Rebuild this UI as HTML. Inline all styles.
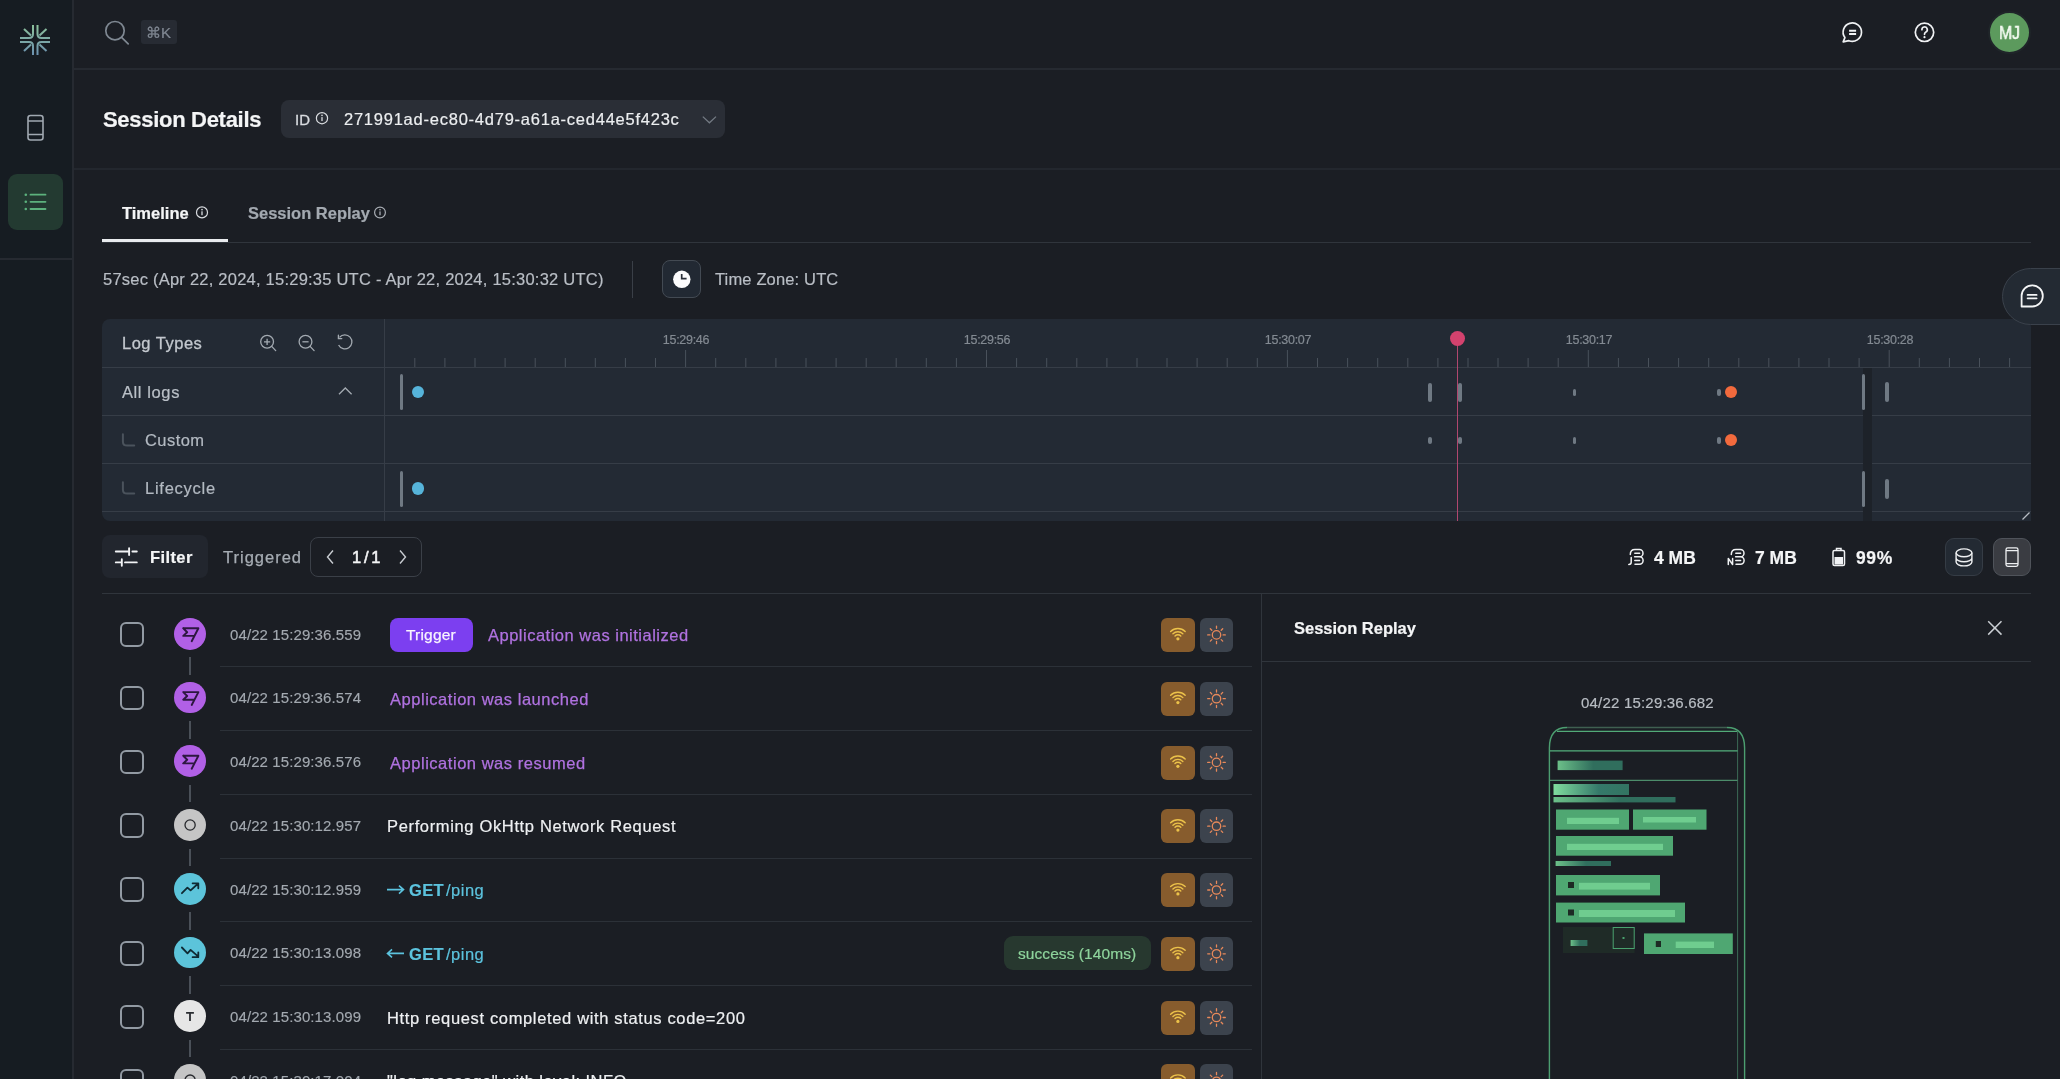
<!DOCTYPE html>
<html><head><meta charset="utf-8"><style>
*{box-sizing:border-box;margin:0;padding:0}
html,body{width:2060px;height:1079px;overflow:hidden;background:#1b1e24;font-family:"Liberation Sans",sans-serif;color:#e6e8eb}
.a{position:absolute}
.t{position:absolute;white-space:pre;line-height:1;will-change:transform;-webkit-text-stroke-width:0.2px}
svg{position:absolute;overflow:visible}
</style></head><body>
<div class="a" style="left:0px;top:0px;width:72px;height:1079px;background:#161c22"></div>
<div class="a" style="left:72px;top:0px;width:2px;height:1079px;background:#262a31"></div>
<div class="a" style="left:0px;top:258px;width:72px;height:2px;background:#262a31"></div>
<svg style="left:0px;top:0px" width="72" height="72" viewBox="0 0 72 72"><defs><linearGradient id="lg" x1="0" y1="24" x2="0" y2="56" gradientUnits="userSpaceOnUse"><stop offset="0" stop-color="#8ec39b"/><stop offset="1" stop-color="#6a8fb0"/></linearGradient></defs>
<g fill="none" stroke="url(#lg)" stroke-width="2">
<path d="M33 25V34Q33 38 29 38H20"/><path d="M24 29L31 35.5"/>
<path d="M37.5 25V34Q37.5 38 41.5 38H50"/><path d="M46.5 29L39.5 35.5"/>
<path d="M33 55V46Q33 42 29 42H20"/><path d="M24 51L31 44.5"/>
<path d="M37.5 55V46Q37.5 42 41.5 42H50"/><path d="M46.5 51L39.5 44.5"/></g></svg>
<svg style="left:0px;top:100px" width="72" height="60" viewBox="0 100 72 60"><g fill="none" stroke="#a0a8b1" stroke-width="1.6"><rect x="28" y="115.5" width="15" height="24.5" rx="2.5"/><path d="M28 121H43M28 134.5H43"/></g></svg>
<div class="a" style="left:8px;top:174px;width:55px;height:56px;border-radius:9px;background:#233a31"></div>
<svg style="left:0px;top:180px" width="72" height="40" viewBox="0 180 72 40"><g stroke="#5cb27d" stroke-width="1.8" stroke-linecap="round"><path d="M30.5 194.7H45.5M30.5 201.8H45.5M30.5 209H45.5"/></g><g fill="#5cb27d"><circle cx="25.8" cy="194.7" r="1.3"/><circle cx="25.8" cy="201.8" r="1.3"/><circle cx="25.8" cy="209" r="1.3"/></g></svg>
<div class="a" style="left:74px;top:68px;width:1986px;height:2px;background:#262a31"></div>
<svg style="left:100px;top:15px" width="40" height="40" viewBox="100 15 40 40"><g fill="none" stroke="#7f8892" stroke-width="1.7"><circle cx="115" cy="30.7" r="9.2"/><path d="M121.6 37.3L128.2 43.8" stroke-linecap="round"/></g></svg>
<div class="a" style="left:141px;top:20px;width:36px;height:24px;border-radius:3px;background:#272b33"></div>
<div class="t" style="left:146px;top:25px;font-size:15px;color:#808893">⌘K</div>
<svg style="left:1838px;top:18px" width="30" height="30" viewBox="1838 18 30 30"><g fill="none" stroke="#f0f2f4" stroke-width="1.7" stroke-linejoin="round"><path d="M1843.2 41.800000000000004 L1844.9 37.6 A9.2 9.2 0 1 1 1848.9 40.7 Z"/><path d="M1849.1 30.800000000000004H1856.1M1849.1 34.1H1856.1" stroke-width="2"/></g></svg>
<svg style="left:1910px;top:18px" width="30" height="30" viewBox="1910 18 30 30"><g fill="none" stroke="#f0f2f4" stroke-width="1.7"><circle cx="1924.5" cy="32.3" r="9.2"/><path d="M1921.9 29.7A2.7 2.7 0 1 1 1925.6 32.2Q1924.5 32.8 1924.5 34.3" stroke-linecap="round"/></g><circle cx="1924.5" cy="37.2" r="1.1" fill="#f0f2f4"/></svg>
<div class="a" style="left:1988px;top:11px;width:43px;height:43px;border-radius:50%;background:#5c9a5d;border:2px solid #1f2529"></div>
<div class="t" style="left:1999px;top:25.2px;font-size:17.5px;color:#f4fbf2;-webkit-text-stroke:0.5px #f4fbf2;transform:scaleX(0.9);transform-origin:0 0">MJ</div>
<div class="t" style="left:103px;top:109px;font-size:22px;font-weight:700;color:#f4f5f6;letter-spacing:-0.3px">Session Details</div>
<div class="a" style="left:281px;top:100px;width:444px;height:38px;border-radius:8px;background:#2a2e36"></div>
<div class="t" style="left:295px;top:112px;font-size:15px;color:#d9dce0;-webkit-text-stroke:0.3px #d9dce0">ID</div>
<svg style="left:312px;top:110px" width="20" height="20" viewBox="312 110 20 20"><g fill="none" stroke="#d9dce0" stroke-width="1.2"><circle cx="322" cy="118.2" r="5.6"/></g><g fill="#d9dce0"><rect x="321.35" y="117.10" width="1.3" height="3.96"/><circle cx="322" cy="115.40" r="0.8"/></g></svg>
<div class="t" style="left:344px;top:111px;font-size:16.5px;color:#eceef0;letter-spacing:0.76px">271991ad-ec80-4d79-a61a-ced44e5f423c</div>
<svg style="left:700px;top:110px" width="20" height="20" viewBox="700 110 20 20"><path d="M702.8 116.6L709.4 122.8L716 116.6" fill="none" stroke="#737a83" stroke-width="1.3"/></svg>
<div class="a" style="left:74px;top:168px;width:1986px;height:2px;background:#23272e"></div>
<div class="t" style="left:122px;top:205px;font-size:16.5px;font-weight:700;color:#f4f5f6">Timeline</div>
<svg style="left:194px;top:205px" width="16" height="16" viewBox="194 205 16 16"><g fill="none" stroke="#d9dce0" stroke-width="1.2"><circle cx="202" cy="212.4" r="5.5"/></g><g fill="#d9dce0"><rect x="201.35" y="211.30" width="1.3" height="3.90"/><circle cx="202" cy="209.65" r="0.8"/></g></svg>
<div class="t" style="left:248px;top:205px;font-size:16.5px;font-weight:700;color:#a3a9b0">Session Replay</div>
<svg style="left:372px;top:205px" width="16" height="16" viewBox="372 205 16 16"><g fill="none" stroke="#a9aeb5" stroke-width="1.2"><circle cx="380" cy="212.5" r="5.4"/></g><g fill="#a9aeb5"><rect x="379.35" y="211.40" width="1.3" height="3.84"/><circle cx="380" cy="209.80" r="0.8"/></g></svg>
<div class="a" style="left:102px;top:242px;width:1929px;height:1px;background:#30353c"></div>
<div class="a" style="left:102px;top:239px;width:126px;height:3px;background:#e9ebee"></div>
<div class="t" style="left:103px;top:271px;font-size:16.5px;color:#b9bec5;letter-spacing:0.23px">57sec (Apr 22, 2024, 15:29:35 UTC - Apr 22, 2024, 15:30:32 UTC)</div>
<div class="a" style="left:632px;top:261px;width:1px;height:37px;background:#3a3f47"></div>
<div class="a" style="left:662px;top:260px;width:39px;height:38px;border-radius:8px;background:#222933;border:1px solid #434a53"></div>
<svg style="left:670px;top:268px" width="24" height="24" viewBox="670 268 24 24"><circle cx="681.8" cy="279.3" r="8.7" fill="#fbfbfc"/><path d="M681.7 274V278.7H686.6" fill="none" stroke="#2a2f38" stroke-width="1.7"/></svg>
<div class="t" style="left:715px;top:271px;font-size:16.5px;color:#b9bec5;letter-spacing:0.15px">Time Zone: UTC</div>
<div class="a" style="left:102px;top:319px;width:1929px;height:202px;border-radius:8px 8px 0 8px;background:#232a34"></div>
<div class="a" style="left:384px;top:319px;width:1px;height:202px;background:#363d47"></div>
<div class="a" style="left:102px;top:367px;width:1929px;height:1px;background:#363d47"></div>
<div class="a" style="left:102px;top:415px;width:1929px;height:1px;background:#363d47"></div>
<div class="a" style="left:102px;top:463px;width:1929px;height:1px;background:#363d47"></div>
<div class="a" style="left:102px;top:511px;width:1929px;height:1px;background:#363d47"></div>
<div class="t" style="left:122px;top:335px;font-size:16.5px;color:#c3c8ce;letter-spacing:0.5px;-webkit-text-stroke:0.3px #c3c8ce">Log Types</div>
<svg style="left:255px;top:330px" width="30" height="30" viewBox="255 330 30 30"><g fill="none" stroke="#a3aab1" stroke-width="1.3"><circle cx="267.1" cy="341.8" r="6.4"/><path d="M271.7 346.4L275.7 350.6" stroke-linecap="round"/><path d="M264 341.8H270.2M267.1 338.7V344.9"/></g></svg>
<svg style="left:293px;top:330px" width="30" height="30" viewBox="293 330 30 30"><g fill="none" stroke="#a3aab1" stroke-width="1.3"><circle cx="305.5" cy="341.8" r="6.4"/><path d="M310.1 346.4L314.1 350.6" stroke-linecap="round"/><path d="M302.4 341.8H308.6"/></g></svg>
<svg style="left:333px;top:330px" width="30" height="30" viewBox="333 330 30 30"><g fill="none" stroke="#a3aab1" stroke-width="1.3"><path d="M339.5 337.4A7 7 0 1 1 338.6 345" /><path d="M338.4 335.2V338.6H341.8" stroke-linecap="round"/></g></svg>
<div class="t" style="left:122px;top:384px;font-size:16.5px;color:#bac0c7;letter-spacing:0.6px">All logs</div>
<svg style="left:336px;top:383px" width="20" height="15" viewBox="336 383 20 15"><path d="M339 394.3L345.3 388L351.6 394.3" fill="none" stroke="#a3aab1" stroke-width="1.3"/></svg>
<svg style="left:118px;top:430px" width="20" height="20" viewBox="118 430 20 20"><path d="M122.9 434.3V441.4Q122.9 445.6 127.2 445.6H134.2" fill="none" stroke="#4b535c" stroke-width="2" stroke-linecap="round"/></svg>
<div class="t" style="left:144.5px;top:432px;font-size:16.5px;color:#b3bac2;letter-spacing:0.45px">Custom</div>
<svg style="left:118px;top:478px" width="20" height="20" viewBox="118 478 20 20"><path d="M122.9 482.3V489.4Q122.9 493.6 127.2 493.6H134.2" fill="none" stroke="#4b535c" stroke-width="2" stroke-linecap="round"/></svg>
<div class="t" style="left:144.5px;top:480px;font-size:16.5px;color:#b3bac2;letter-spacing:0.75px">Lifecycle</div>
<svg style="left:385px;top:340px" width="1650" height="30" viewBox="385 340 1650 30"><g fill="#49515b"><rect x="414.3" y="358" width="1" height="9"/><rect x="444.4" y="358" width="1" height="9"/><rect x="474.5" y="358" width="1" height="9"/><rect x="504.6" y="358" width="1" height="9"/><rect x="534.7" y="358" width="1" height="9"/><rect x="564.8" y="358" width="1" height="9"/><rect x="594.8" y="358" width="1" height="9"/><rect x="624.9" y="358" width="1" height="9"/><rect x="655.0" y="358" width="1" height="9"/><rect x="685.1" y="350" width="1" height="17"/><rect x="715.2" y="358" width="1" height="9"/><rect x="745.3" y="358" width="1" height="9"/><rect x="775.4" y="358" width="1" height="9"/><rect x="805.5" y="358" width="1" height="9"/><rect x="835.6" y="358" width="1" height="9"/><rect x="865.7" y="358" width="1" height="9"/><rect x="895.7" y="358" width="1" height="9"/><rect x="925.8" y="358" width="1" height="9"/><rect x="955.9" y="358" width="1" height="9"/><rect x="986.0" y="350" width="1" height="17"/><rect x="1016.1" y="358" width="1" height="9"/><rect x="1046.2" y="358" width="1" height="9"/><rect x="1076.3" y="358" width="1" height="9"/><rect x="1106.4" y="358" width="1" height="9"/><rect x="1136.5" y="358" width="1" height="9"/><rect x="1166.5" y="358" width="1" height="9"/><rect x="1196.6" y="358" width="1" height="9"/><rect x="1226.7" y="358" width="1" height="9"/><rect x="1256.8" y="358" width="1" height="9"/><rect x="1286.9" y="350" width="1" height="17"/><rect x="1317.0" y="358" width="1" height="9"/><rect x="1347.1" y="358" width="1" height="9"/><rect x="1377.2" y="358" width="1" height="9"/><rect x="1407.3" y="358" width="1" height="9"/><rect x="1437.4" y="358" width="1" height="9"/><rect x="1467.5" y="358" width="1" height="9"/><rect x="1497.5" y="358" width="1" height="9"/><rect x="1527.6" y="358" width="1" height="9"/><rect x="1557.7" y="358" width="1" height="9"/><rect x="1587.8" y="350" width="1" height="17"/><rect x="1617.9" y="358" width="1" height="9"/><rect x="1648.0" y="358" width="1" height="9"/><rect x="1678.1" y="358" width="1" height="9"/><rect x="1708.2" y="358" width="1" height="9"/><rect x="1738.3" y="358" width="1" height="9"/><rect x="1768.3" y="358" width="1" height="9"/><rect x="1798.4" y="358" width="1" height="9"/><rect x="1828.5" y="358" width="1" height="9"/><rect x="1858.6" y="358" width="1" height="9"/><rect x="1888.7" y="350" width="1" height="17"/><rect x="1918.8" y="358" width="1" height="9"/><rect x="1948.9" y="358" width="1" height="9"/><rect x="1979.0" y="358" width="1" height="9"/><rect x="2009.1" y="358" width="1" height="9"/></g></svg>
<div class="t" style="left:646.1px;top:333.6px;width:80px;text-align:center;font-size:12.5px;color:#838a92;letter-spacing:-0.3px">15:29:46</div>
<div class="t" style="left:947.0px;top:333.6px;width:80px;text-align:center;font-size:12.5px;color:#838a92;letter-spacing:-0.3px">15:29:56</div>
<div class="t" style="left:1247.9px;top:333.6px;width:80px;text-align:center;font-size:12.5px;color:#838a92;letter-spacing:-0.3px">15:30:07</div>
<div class="t" style="left:1548.8px;top:333.6px;width:80px;text-align:center;font-size:12.5px;color:#838a92;letter-spacing:-0.3px">15:30:17</div>
<div class="t" style="left:1849.7px;top:333.6px;width:80px;text-align:center;font-size:12.5px;color:#838a92;letter-spacing:-0.3px">15:30:28</div>
<div class="a" style="left:1863px;top:368px;width:9px;height:153px;background:#1d2229"></div>
<div class="a" style="left:399.5px;top:374.0px;width:3.6px;height:36px;border-radius:2px;background:#6f7983"></div>
<div class="a" style="left:411.5px;top:385.8px;width:12.4px;height:12.4px;border-radius:50%;background:#56b4da"></div>
<div class="a" style="left:399.5px;top:470.5px;width:3.6px;height:36px;border-radius:2px;background:#6f7983"></div>
<div class="a" style="left:411.5px;top:482.3px;width:12.4px;height:12.4px;border-radius:50%;background:#56b4da"></div>
<div class="a" style="left:1428.2px;top:382.5px;width:3.6px;height:19px;border-radius:2px;background:#6f7983"></div>
<div class="a" style="left:1458.2px;top:382.5px;width:3.6px;height:19px;border-radius:2px;background:#6f7983"></div>
<div class="a" style="left:1572.5px;top:388.5px;width:3.6px;height:7px;border-radius:2px;background:#6f7983"></div>
<div class="a" style="left:1717.0px;top:388.5px;width:3.6px;height:7px;border-radius:2px;background:#6f7983"></div>
<div class="a" style="left:1725.2px;top:385.9px;width:12.2px;height:12.2px;border-radius:50%;background:#f26a3d"></div>
<div class="a" style="left:1428.2px;top:436.5px;width:3.6px;height:7px;border-radius:2px;background:#6f7983"></div>
<div class="a" style="left:1458.2px;top:436.5px;width:3.6px;height:7px;border-radius:2px;background:#6f7983"></div>
<div class="a" style="left:1572.5px;top:436.5px;width:3.6px;height:7px;border-radius:2px;background:#6f7983"></div>
<div class="a" style="left:1717.0px;top:436.5px;width:3.6px;height:7px;border-radius:2px;background:#6f7983"></div>
<div class="a" style="left:1725.2px;top:433.9px;width:12.2px;height:12.2px;border-radius:50%;background:#f26a3d"></div>
<div class="a" style="left:1861.7px;top:374.0px;width:3.6px;height:36px;border-radius:2px;background:#6f7983"></div>
<div class="a" style="left:1885.2px;top:382.0px;width:3.6px;height:20px;border-radius:2px;background:#6f7983"></div>
<div class="a" style="left:1861.7px;top:470.5px;width:3.6px;height:36px;border-radius:2px;background:#6f7983"></div>
<div class="a" style="left:1885.2px;top:478.5px;width:3.6px;height:20px;border-radius:2px;background:#6f7983"></div>
<div class="a" style="left:1457.3px;top:338px;width:1.1px;height:183px;background:#b0476f"></div>
<div class="a" style="left:1450.1px;top:330.9px;width:15.4px;height:15.4px;border-radius:50%;background:#d3426e"></div>
<svg style="left:2018px;top:510px" width="14" height="14" viewBox="2018 510 14 14"><path d="M2022.5 519.5L2029.5 512.5" stroke="#b8bec5" stroke-width="1.3"/></svg>
<div class="a" style="left:102px;top:535px;width:106px;height:43px;border-radius:8px;background:#22262e"></div>
<svg style="left:112px;top:545px" width="30" height="25" viewBox="112 545 30 25"><path d="M115.8 551.5H129.1M129.1 548.3V555M132.4 551.5H136.8M115.8 562.4H121.8M121.8 559.2V565.7M125 562.4H136.8" fill="none" stroke="#f2f3f5" stroke-width="1.9" stroke-linecap="round"/></svg>
<div class="t" style="left:150px;top:549px;font-size:16.5px;font-weight:700;color:#f4f5f6;letter-spacing:0.4px">Filter</div>
<div class="t" style="left:223px;top:549px;font-size:16.5px;color:#a7adb4;letter-spacing:1px;-webkit-text-stroke:0.25px #a7adb4">Triggered</div>
<div class="a" style="left:310px;top:537px;width:112px;height:40px;border-radius:8px;border:1px solid #3b4048"></div>
<svg style="left:322px;top:545px" width="90" height="25" viewBox="322 545 90 25"><g fill="none" stroke="#c9cdd2" stroke-width="1.4"><path d="M333 550.5L327.5 557L333 563.5M400 550.5L405.5 557L400 563.5"/></g></svg>
<div class="t" style="left:351.5px;top:549px;font-size:16.5px;color:#f4f5f6;letter-spacing:-0.9px;-webkit-text-stroke:0.55px #f4f5f6">1 / 1</div>
<svg style="left:1622px;top:545px" width="30" height="25" viewBox="1622 545 30 25"><g fill="none" stroke="#f0f2f4" stroke-width="1.5" stroke-linecap="round"><path d="M1630.3 554.6Q1630.3 549.6 1635 549.6H1639.4A3.6 3.6 0 0 1 1639.4 556.8H1634.6M1639.4 556.8A3.7 3.7 0 0 1 1639.4 564.2H1635"/><path d="M1634.8 553.3H1639.6M1634.8 560.6H1639.6"/><path d="M1631.2 557.6V562.3Q1631.2 564.4 1628.8 564.4"/></g></svg>
<div class="t" style="left:1653.5px;top:550.3px;font-size:17.5px;font-weight:700;color:#f4f5f6">4 MB</div>
<svg style="left:1722px;top:545px" width="30" height="25" viewBox="1722 545 30 25"><g fill="none" stroke="#f0f2f4" stroke-width="1.5" stroke-linecap="round"><path d="M1731.3 554.6Q1731.3 549.6 1736 549.6H1740.4A3.6 3.6 0 0 1 1740.4 556.8H1735.6M1740.4 556.8A3.7 3.7 0 0 1 1740.4 564.2H1736"/><path d="M1735.8 553.3H1740.6M1735.8 560.6H1740.6"/><path d="M1728.3 564.5V558.4L1732.6 564.5V558.4" stroke-linejoin="round"/></g></svg>
<div class="t" style="left:1754.8px;top:550.3px;font-size:17.5px;font-weight:700;color:#f4f5f6">7 MB</div>
<svg style="left:1828px;top:545px" width="25" height="25" viewBox="1828 545 25 25"><g fill="none" stroke="#f0f2f4" stroke-width="1.5"><rect x="1833" y="550.5" width="11.5" height="15" rx="1.5"/><path d="M1836.5 550V548.5H1841V550"/></g><rect x="1834.5" y="557" width="8.5" height="7.5" fill="#f0f2f4"/></svg>
<div class="t" style="left:1855.5px;top:550.3px;font-size:17.5px;font-weight:700;color:#f4f5f6;letter-spacing:0.6px">99%</div>
<div class="a" style="left:1945px;top:538px;width:38px;height:38px;border-radius:9px;background:#232a33;border:1px solid #353c45"></div>
<svg style="left:1952px;top:545px" width="25" height="25" viewBox="1952 545 25 25"><g fill="none" stroke="#eef0f2" stroke-width="1.4"><ellipse cx="1964" cy="552.8" rx="7.9" ry="3.9"/><path d="M1956.1 552.8V557.9A7.9 3.9 0 0 0 1971.9 557.9V552.8M1956.1 557.9V562A7.9 3.9 0 0 0 1971.9 562V557.9"/></g></svg>
<div class="a" style="left:1993px;top:538px;width:38px;height:38px;border-radius:9px;background:#3a3c42;border:1px solid #4f535a"></div>
<svg style="left:2000px;top:545px" width="25" height="25" viewBox="2000 545 25 25"><g fill="none" stroke="#eef0f2" stroke-width="1.3"><rect x="2006" y="547.9" width="12" height="18.5" rx="1.8"/><path d="M2006 550.6H2018M2006 563.6H2018"/></g></svg>
<div class="a" style="left:102px;top:593px;width:1929px;height:1px;background:#30353c"></div>
<div class="a" style="left:1261px;top:593px;width:1px;height:486px;background:#30353c"></div>
<div class="a" style="left:120px;top:622.1px;width:24.2px;height:24.6px;border-radius:6px;border:2px solid #929aa3"></div>
<div class="a" style="left:189px;top:657.2px;width:2px;height:17.5px;background:#4a5058"></div>
<div class="a" style="left:174.3px;top:617.8px;width:31.8px;height:31.8px;border-radius:50%;background:#b160e6"></div>
<svg style="left:180px;top:623px" width="20" height="20" viewBox="180 623 20 20"><path d="M183.2 628.3H198.4L191.7 641.2M183.2 628.3L187.2 632.2L183.2 635.9H194.3" fill="none" stroke="#2d1740" stroke-width="1.9" stroke-linejoin="round" stroke-linecap="round"/></svg>
<div class="t" style="left:230px;top:626.5px;font-size:15px;color:#a3a9b0;letter-spacing:0.1px;-webkit-text-stroke:0.15px #a3a9b0">04/22 15:29:36.559</div>
<div class="a" style="left:390px;top:617.7px;width:83px;height:34px;border-radius:8px;background:#7c3ff0"></div>
<div class="t" style="left:405.5px;top:627.1px;font-size:15.5px;color:#f8f4ff;letter-spacing:0.2px;-webkit-text-stroke:0.25px #f8f4ff">Trigger</div>
<div class="t" style="left:488px;top:627.0px;font-size:16.5px;color:#b072e0;letter-spacing:0.5px;-webkit-text-stroke:0.25px #b072e0">Application was initialized</div>
<div class="a" style="left:1161.2px;top:618.0px;width:33.6px;height:34px;border-radius:6px;background:#875c2d"></div>
<div class="a" style="left:1200px;top:618.0px;width:33px;height:34px;border-radius:6px;background:#3c434d"></div>
<svg style="left:1166px;top:623px" width="24" height="24" viewBox="1166 623 24 24"><g fill="none" stroke="#ecc24a" stroke-width="1.4" stroke-linecap="round"><path d="M1170.62 631.52A10.3 10.3 0 0 1 1185.18 631.52"/><path d="M1172.95 633.85A7 7 0 0 1 1182.85 633.85"/><path d="M1175.00 635.90A4.1 4.1 0 0 1 1180.80 635.90"/></g><circle cx="1177.9" cy="638.80" r="1.6" fill="#ecc24a"/></svg>
<svg style="left:1204px;top:623px" width="25" height="25" viewBox="1204 623 25 25"><g fill="none" stroke="#e8895a" stroke-width="1.3" stroke-linecap="round"><circle cx="1216.5" cy="634.9" r="4.2"/><path d="M1223.1 634.9L1225.3 634.9M1221.2 639.6L1222.7 641.1M1216.5 641.5L1216.5 643.7M1211.8 639.6L1210.3 641.1M1209.9 634.9L1207.7 634.9M1211.8 630.2L1210.3 628.7M1216.5 628.3L1216.5 626.1M1221.2 630.2L1222.7 628.7"/></g></svg>
<div class="a" style="left:220px;top:666.3px;width:1032px;height:1px;background:#2c3138"></div>
<div class="a" style="left:120px;top:685.9px;width:24.2px;height:24.6px;border-radius:6px;border:2px solid #929aa3"></div>
<div class="a" style="left:189px;top:721.0px;width:2px;height:17.5px;background:#4a5058"></div>
<div class="a" style="left:174.3px;top:681.6px;width:31.8px;height:31.8px;border-radius:50%;background:#b160e6"></div>
<svg style="left:180px;top:687px" width="20" height="20" viewBox="180 687 20 20"><path d="M183.2 692.1H198.4L191.7 705.0M183.2 692.1L187.2 696.0L183.2 699.7H194.3" fill="none" stroke="#2d1740" stroke-width="1.9" stroke-linejoin="round" stroke-linecap="round"/></svg>
<div class="t" style="left:230px;top:690.3px;font-size:15px;color:#a3a9b0;letter-spacing:0.1px;-webkit-text-stroke:0.15px #a3a9b0">04/22 15:29:36.574</div>
<div class="t" style="left:390.4px;top:690.8px;font-size:16.5px;color:#b072e0;letter-spacing:0.53px;-webkit-text-stroke:0.25px #b072e0">Application was launched</div>
<div class="a" style="left:1161.2px;top:681.8px;width:33.6px;height:34px;border-radius:6px;background:#875c2d"></div>
<div class="a" style="left:1200px;top:681.8px;width:33px;height:34px;border-radius:6px;background:#3c434d"></div>
<svg style="left:1166px;top:686px" width="24" height="24" viewBox="1166 686 24 24"><g fill="none" stroke="#ecc24a" stroke-width="1.4" stroke-linecap="round"><path d="M1170.62 695.29A10.3 10.3 0 0 1 1185.18 695.29"/><path d="M1172.95 697.62A7 7 0 0 1 1182.85 697.62"/><path d="M1175.00 699.67A4.1 4.1 0 0 1 1180.80 699.67"/></g><circle cx="1177.9" cy="702.57" r="1.6" fill="#ecc24a"/></svg>
<svg style="left:1204px;top:686px" width="25" height="25" viewBox="1204 686 25 25"><g fill="none" stroke="#e8895a" stroke-width="1.3" stroke-linecap="round"><circle cx="1216.5" cy="698.7" r="4.2"/><path d="M1223.1 698.7L1225.3 698.7M1221.2 703.3L1222.7 704.9M1216.5 705.3L1216.5 707.5M1211.8 703.3L1210.3 704.9M1209.9 698.7L1207.7 698.7M1211.8 694.0L1210.3 692.4M1216.5 692.1L1216.5 689.9M1221.2 694.0L1222.7 692.4"/></g></svg>
<div class="a" style="left:220px;top:730.1px;width:1032px;height:1px;background:#2c3138"></div>
<div class="a" style="left:120px;top:749.6px;width:24.2px;height:24.6px;border-radius:6px;border:2px solid #929aa3"></div>
<div class="a" style="left:189px;top:784.7px;width:2px;height:17.5px;background:#4a5058"></div>
<div class="a" style="left:174.3px;top:745.3px;width:31.8px;height:31.8px;border-radius:50%;background:#b160e6"></div>
<svg style="left:180px;top:751px" width="20" height="20" viewBox="180 751 20 20"><path d="M183.2 755.8H198.4L191.7 768.7M183.2 755.8L187.2 759.7L183.2 763.4H194.3" fill="none" stroke="#2d1740" stroke-width="1.9" stroke-linejoin="round" stroke-linecap="round"/></svg>
<div class="t" style="left:230px;top:754.0px;font-size:15px;color:#a3a9b0;letter-spacing:0.1px;-webkit-text-stroke:0.15px #a3a9b0">04/22 15:29:36.576</div>
<div class="t" style="left:390.4px;top:754.5px;font-size:16.5px;color:#b072e0;letter-spacing:0.53px;-webkit-text-stroke:0.25px #b072e0">Application was resumed</div>
<div class="a" style="left:1161.2px;top:745.5px;width:33.6px;height:34px;border-radius:6px;background:#875c2d"></div>
<div class="a" style="left:1200px;top:745.5px;width:33px;height:34px;border-radius:6px;background:#3c434d"></div>
<svg style="left:1166px;top:750px" width="24" height="24" viewBox="1166 750 24 24"><g fill="none" stroke="#ecc24a" stroke-width="1.4" stroke-linecap="round"><path d="M1170.62 759.06A10.3 10.3 0 0 1 1185.18 759.06"/><path d="M1172.95 761.39A7 7 0 0 1 1182.85 761.39"/><path d="M1175.00 763.44A4.1 4.1 0 0 1 1180.80 763.44"/></g><circle cx="1177.9" cy="766.34" r="1.6" fill="#ecc24a"/></svg>
<svg style="left:1204px;top:750px" width="25" height="25" viewBox="1204 750 25 25"><g fill="none" stroke="#e8895a" stroke-width="1.3" stroke-linecap="round"><circle cx="1216.5" cy="762.4" r="4.2"/><path d="M1223.1 762.4L1225.3 762.4M1221.2 767.1L1222.7 768.7M1216.5 769.0L1216.5 771.2M1211.8 767.1L1210.3 768.7M1209.9 762.4L1207.7 762.4M1211.8 757.8L1210.3 756.2M1216.5 755.8L1216.5 753.6M1221.2 757.8L1222.7 756.2"/></g></svg>
<div class="a" style="left:220px;top:793.8px;width:1032px;height:1px;background:#2c3138"></div>
<div class="a" style="left:120px;top:813.4px;width:24.2px;height:24.6px;border-radius:6px;border:2px solid #929aa3"></div>
<div class="a" style="left:189px;top:848.5px;width:2px;height:17.5px;background:#4a5058"></div>
<div class="a" style="left:174.3px;top:809.1px;width:31.8px;height:31.8px;border-radius:50%;background:#c5c5c5"></div>
<svg style="left:180px;top:815px" width="20" height="20" viewBox="180 815 20 20"><circle cx="190.1" cy="825.0" r="5.1" fill="none" stroke="#26282c" stroke-width="1.3"/></svg>
<div class="t" style="left:230px;top:817.8px;font-size:15px;color:#a3a9b0;letter-spacing:0.1px;-webkit-text-stroke:0.15px #a3a9b0">04/22 15:30:12.957</div>
<div class="t" style="left:387px;top:818.3px;font-size:16.5px;color:#eef0f2;letter-spacing:0.65px;-webkit-text-stroke:0.2px #eef0f2">Performing OkHttp Network Request</div>
<div class="a" style="left:1161.2px;top:809.3px;width:33.6px;height:34px;border-radius:6px;background:#875c2d"></div>
<div class="a" style="left:1200px;top:809.3px;width:33px;height:34px;border-radius:6px;background:#3c434d"></div>
<svg style="left:1166px;top:814px" width="24" height="24" viewBox="1166 814 24 24"><g fill="none" stroke="#ecc24a" stroke-width="1.4" stroke-linecap="round"><path d="M1170.62 822.83A10.3 10.3 0 0 1 1185.18 822.83"/><path d="M1172.95 825.16A7 7 0 0 1 1182.85 825.16"/><path d="M1175.00 827.21A4.1 4.1 0 0 1 1180.80 827.21"/></g><circle cx="1177.9" cy="830.11" r="1.6" fill="#ecc24a"/></svg>
<svg style="left:1204px;top:814px" width="25" height="25" viewBox="1204 814 25 25"><g fill="none" stroke="#e8895a" stroke-width="1.3" stroke-linecap="round"><circle cx="1216.5" cy="826.2" r="4.2"/><path d="M1223.1 826.2L1225.3 826.2M1221.2 830.9L1222.7 832.4M1216.5 832.8L1216.5 835.0M1211.8 830.9L1210.3 832.4M1209.9 826.2L1207.7 826.2M1211.8 821.5L1210.3 820.0M1216.5 819.6L1216.5 817.4M1221.2 821.5L1222.7 820.0"/></g></svg>
<div class="a" style="left:220px;top:857.6px;width:1032px;height:1px;background:#2c3138"></div>
<div class="a" style="left:120px;top:877.2px;width:24.2px;height:24.6px;border-radius:6px;border:2px solid #929aa3"></div>
<div class="a" style="left:189px;top:912.3px;width:2px;height:17.5px;background:#4a5058"></div>
<div class="a" style="left:174.3px;top:872.9px;width:31.8px;height:31.8px;border-radius:50%;background:#5cc4da"></div>
<svg style="left:180px;top:878px" width="20" height="20" viewBox="180 878 20 20"><path d="M181.9 893.2L187.4 887.6L190.6 890.4L198.2 883.5M192.6 883.3H198.3V888.3" fill="none" stroke="#0f2a33" stroke-width="1.8" stroke-linejoin="round" stroke-linecap="round"/></svg>
<div class="t" style="left:230px;top:881.6px;font-size:15px;color:#a3a9b0;letter-spacing:0.1px;-webkit-text-stroke:0.15px #a3a9b0">04/22 15:30:12.959</div>
<svg style="left:384px;top:880px" width="24" height="16" viewBox="384 880 24 16"><path d="M387 889.6H403.5M399 885.6L403.5 889.6L399 893.6" fill="none" stroke="#5cc3de" stroke-width="1.6"/></svg>
<div class="t" style="left:409px;top:882.1px;font-size:16.5px;font-weight:700;color:#5cc3de;letter-spacing:0.3px">GET</div>
<div class="t" style="left:446px;top:882.1px;font-size:16.5px;color:#5cc3de;letter-spacing:0.5px">/ping</div>
<div class="a" style="left:1161.2px;top:873.1px;width:33.6px;height:34px;border-radius:6px;background:#875c2d"></div>
<div class="a" style="left:1200px;top:873.1px;width:33px;height:34px;border-radius:6px;background:#3c434d"></div>
<svg style="left:1166px;top:878px" width="24" height="24" viewBox="1166 878 24 24"><g fill="none" stroke="#ecc24a" stroke-width="1.4" stroke-linecap="round"><path d="M1170.62 886.60A10.3 10.3 0 0 1 1185.18 886.60"/><path d="M1172.95 888.93A7 7 0 0 1 1182.85 888.93"/><path d="M1175.00 890.98A4.1 4.1 0 0 1 1180.80 890.98"/></g><circle cx="1177.9" cy="893.88" r="1.6" fill="#ecc24a"/></svg>
<svg style="left:1204px;top:878px" width="25" height="25" viewBox="1204 878 25 25"><g fill="none" stroke="#e8895a" stroke-width="1.3" stroke-linecap="round"><circle cx="1216.5" cy="890.0" r="4.2"/><path d="M1223.1 890.0L1225.3 890.0M1221.2 894.6L1222.7 896.2M1216.5 896.6L1216.5 898.8M1211.8 894.6L1210.3 896.2M1209.9 890.0L1207.7 890.0M1211.8 885.3L1210.3 883.8M1216.5 883.4L1216.5 881.2M1221.2 885.3L1222.7 883.8"/></g></svg>
<div class="a" style="left:220px;top:921.4px;width:1032px;height:1px;background:#2c3138"></div>
<div class="a" style="left:120px;top:941.0px;width:24.2px;height:24.6px;border-radius:6px;border:2px solid #929aa3"></div>
<div class="a" style="left:189px;top:976.1px;width:2px;height:17.5px;background:#4a5058"></div>
<div class="a" style="left:174.3px;top:936.7px;width:31.8px;height:31.8px;border-radius:50%;background:#5cc4da"></div>
<svg style="left:180px;top:942px" width="20" height="20" viewBox="180 942 20 20"><path d="M181.9 947.5L187.5 953.3L190.6 949.9L198.3 956.6M198.3 952.3V957.2H192.6" fill="none" stroke="#0f2a33" stroke-width="1.8" stroke-linejoin="round" stroke-linecap="round"/></svg>
<div class="t" style="left:230px;top:945.4px;font-size:15px;color:#a3a9b0;letter-spacing:0.1px;-webkit-text-stroke:0.15px #a3a9b0">04/22 15:30:13.098</div>
<svg style="left:384px;top:944px" width="24" height="16" viewBox="384 944 24 16"><path d="M387.5 953.4H404M392 949.4L387.5 953.4L392 957.4" fill="none" stroke="#5cc3de" stroke-width="1.6"/></svg>
<div class="t" style="left:409px;top:945.9px;font-size:16.5px;font-weight:700;color:#5cc3de;letter-spacing:0.3px">GET</div>
<div class="t" style="left:446px;top:945.9px;font-size:16.5px;color:#5cc3de;letter-spacing:0.5px">/ping</div>
<div class="a" style="left:1003.5px;top:936.3px;width:147.5px;height:33.5px;border-radius:9px;background:#27382f"></div>
<div class="t" style="left:1018.3px;top:946.4px;font-size:15.5px;color:#8ed49c;letter-spacing:0.07px">success (140ms)</div>
<div class="a" style="left:1161.2px;top:936.9px;width:33.6px;height:34px;border-radius:6px;background:#875c2d"></div>
<div class="a" style="left:1200px;top:936.9px;width:33px;height:34px;border-radius:6px;background:#3c434d"></div>
<svg style="left:1166px;top:941px" width="24" height="24" viewBox="1166 941 24 24"><g fill="none" stroke="#ecc24a" stroke-width="1.4" stroke-linecap="round"><path d="M1170.62 950.37A10.3 10.3 0 0 1 1185.18 950.37"/><path d="M1172.95 952.70A7 7 0 0 1 1182.85 952.70"/><path d="M1175.00 954.75A4.1 4.1 0 0 1 1180.80 954.75"/></g><circle cx="1177.9" cy="957.65" r="1.6" fill="#ecc24a"/></svg>
<svg style="left:1204px;top:941px" width="25" height="25" viewBox="1204 941 25 25"><g fill="none" stroke="#e8895a" stroke-width="1.3" stroke-linecap="round"><circle cx="1216.5" cy="953.8" r="4.2"/><path d="M1223.1 953.8L1225.3 953.8M1221.2 958.4L1222.7 960.0M1216.5 960.4L1216.5 962.5M1211.8 958.4L1210.3 960.0M1209.9 953.8L1207.7 953.8M1211.8 949.1L1210.3 947.5M1216.5 947.1L1216.5 945.0M1221.2 949.1L1222.7 947.5"/></g></svg>
<div class="a" style="left:220px;top:985.2px;width:1032px;height:1px;background:#2c3138"></div>
<div class="a" style="left:120px;top:1004.7px;width:24.2px;height:24.6px;border-radius:6px;border:2px solid #929aa3"></div>
<div class="a" style="left:189px;top:1039.8px;width:2px;height:17.5px;background:#4a5058"></div>
<div class="a" style="left:174.3px;top:1000.4px;width:31.8px;height:31.8px;border-radius:50%;background:#e6e6e6"></div>
<svg style="left:180px;top:1006px" width="20" height="20" viewBox="180 1006 20 20"><path d="M186.1 1012.9H193.9M190 1012.9V1021.0" fill="none" stroke="#2a2d31" stroke-width="1.8"/></svg>
<div class="t" style="left:230px;top:1009.1px;font-size:15px;color:#a3a9b0;letter-spacing:0.1px;-webkit-text-stroke:0.15px #a3a9b0">04/22 15:30:13.099</div>
<div class="t" style="left:387px;top:1009.6px;font-size:16.5px;color:#eef0f2;letter-spacing:0.65px;-webkit-text-stroke:0.2px #eef0f2">Http request completed with status code=200</div>
<div class="a" style="left:1161.2px;top:1000.6px;width:33.6px;height:34px;border-radius:6px;background:#875c2d"></div>
<div class="a" style="left:1200px;top:1000.6px;width:33px;height:34px;border-radius:6px;background:#3c434d"></div>
<svg style="left:1166px;top:1005px" width="24" height="24" viewBox="1166 1005 24 24"><g fill="none" stroke="#ecc24a" stroke-width="1.4" stroke-linecap="round"><path d="M1170.62 1014.14A10.3 10.3 0 0 1 1185.18 1014.14"/><path d="M1172.95 1016.47A7 7 0 0 1 1182.85 1016.47"/><path d="M1175.00 1018.52A4.1 4.1 0 0 1 1180.80 1018.52"/></g><circle cx="1177.9" cy="1021.42" r="1.6" fill="#ecc24a"/></svg>
<svg style="left:1204px;top:1005px" width="25" height="25" viewBox="1204 1005 25 25"><g fill="none" stroke="#e8895a" stroke-width="1.3" stroke-linecap="round"><circle cx="1216.5" cy="1017.5" r="4.2"/><path d="M1223.1 1017.5L1225.3 1017.5M1221.2 1022.2L1222.7 1023.7M1216.5 1024.1L1216.5 1026.3M1211.8 1022.2L1210.3 1023.7M1209.9 1017.5L1207.7 1017.5M1211.8 1012.9L1210.3 1011.3M1216.5 1010.9L1216.5 1008.7M1221.2 1012.9L1222.7 1011.3"/></g></svg>
<div class="a" style="left:220px;top:1048.9px;width:1032px;height:1px;background:#2c3138"></div>
<div class="a" style="left:120px;top:1068.5px;width:24.2px;height:24.6px;border-radius:6px;border:2px solid #929aa3"></div>
<div class="a" style="left:174.3px;top:1064.2px;width:31.8px;height:31.8px;border-radius:50%;background:#c5c5c5"></div>
<svg style="left:180px;top:1070px" width="20" height="20" viewBox="180 1070 20 20"><circle cx="190.1" cy="1080.1" r="5.1" fill="none" stroke="#26282c" stroke-width="1.3"/></svg>
<div class="t" style="left:230px;top:1072.9px;font-size:15px;color:#a3a9b0;letter-spacing:0.1px;-webkit-text-stroke:0.15px #a3a9b0">04/22 15:30:17.004</div>
<div class="t" style="left:387px;top:1073.4px;font-size:16.5px;color:#eef0f2;letter-spacing:0.45px;-webkit-text-stroke:0.2px #eef0f2">"log message" with level: INFO</div>
<div class="a" style="left:1161.2px;top:1064.4px;width:33.6px;height:34px;border-radius:6px;background:#875c2d"></div>
<div class="a" style="left:1200px;top:1064.4px;width:33px;height:34px;border-radius:6px;background:#3c434d"></div>
<svg style="left:1166px;top:1069px" width="24" height="24" viewBox="1166 1069 24 24"><g fill="none" stroke="#ecc24a" stroke-width="1.4" stroke-linecap="round"><path d="M1170.62 1077.91A10.3 10.3 0 0 1 1185.18 1077.91"/><path d="M1172.95 1080.24A7 7 0 0 1 1182.85 1080.24"/><path d="M1175.00 1082.29A4.1 4.1 0 0 1 1180.80 1082.29"/></g><circle cx="1177.9" cy="1085.19" r="1.6" fill="#ecc24a"/></svg>
<svg style="left:1204px;top:1069px" width="25" height="25" viewBox="1204 1069 25 25"><g fill="none" stroke="#e8895a" stroke-width="1.3" stroke-linecap="round"><circle cx="1216.5" cy="1081.3" r="4.2"/><path d="M1223.1 1081.3L1225.3 1081.3M1221.2 1086.0L1222.7 1087.5M1216.5 1087.9L1216.5 1090.1M1211.8 1086.0L1210.3 1087.5M1209.9 1081.3L1207.7 1081.3M1211.8 1076.6L1210.3 1075.1M1216.5 1074.7L1216.5 1072.5M1221.2 1076.6L1222.7 1075.1"/></g></svg>
<div class="t" style="left:1294px;top:620px;font-size:16.5px;font-weight:700;color:#f4f5f6">Session Replay</div>
<svg style="left:1985px;top:618px" width="20" height="20" viewBox="1985 618 20 20"><path d="M1988.2 621.3L2001.5 634.6M2001.5 621.3L1988.2 634.6" stroke="#c9cdd2" stroke-width="1.5"/></svg>
<div class="a" style="left:1262px;top:661px;width:769px;height:1px;background:#30353c"></div>
<div class="t" style="left:1581px;top:695px;font-size:15px;color:#b8bdc3;letter-spacing:0.2px">04/22 15:29:36.682</div>
<svg style="left:1540px;top:720px" width="210" height="359" viewBox="1540 720 210 359"><defs>
<linearGradient id="g1" x1="0" x2="1"><stop offset="0" stop-color="#6cc089"/><stop offset="0.55" stop-color="#306e5d"/><stop offset="1" stop-color="#306e5d"/></linearGradient>
<linearGradient id="g2" x1="0" x2="1"><stop offset="0" stop-color="#80dc9e"/><stop offset="0.6" stop-color="#35796a"/><stop offset="1" stop-color="#337462"/></linearGradient>
</defs>
<g fill="none" stroke-width="1.4">
<path d="M1549.4 1079V748Q1549.4 727.5 1567 727.5M1727 727.5Q1744.6 727.5 1744.6 748V1079" stroke="#4c9e70"/>
<path d="M1567 727.5H1727" stroke="#3f5f50"/>
<path d="M1557 731.4H1737.6" stroke="#52ab78" stroke-width="1.3"/>
<path d="M1737.6 731V1079" stroke="#3c6a55" stroke-width="1"/>
<path d="M1550 750.8H1737.6" stroke="#55b07c" stroke-width="1.3"/>
<path d="M1550 780.4H1737.6" stroke="#4c8c6a" stroke-width="1.3"/>
</g>
<rect x="1557.6" y="760.6" width="65" height="9.5" fill="url(#g1)"/>
<rect x="1553.5" y="784" width="75.5" height="11" fill="url(#g2)"/>
<rect x="1553.5" y="797" width="122" height="5.4" fill="url(#g1)"/>
<rect x="1556" y="809.5" width="73" height="20.2" fill="#4fa772"/><rect x="1567" y="817.8" width="52" height="6.2" fill="#6fcd8f"/>
<rect x="1633" y="809.5" width="73.5" height="20.2" fill="#4fa772"/><rect x="1643" y="817" width="53" height="5.5" fill="#6fcd8f"/>
<rect x="1556" y="836" width="117" height="19.7" fill="#4fa772"/><rect x="1567" y="843.8" width="96" height="6.2" fill="#6fcd8f"/>
<rect x="1555.6" y="861" width="55.4" height="5" fill="url(#g1)"/>
<rect x="1556" y="875" width="104" height="20.4" fill="#4fa772"/><rect x="1568" y="882" width="6" height="6" fill="#1d2a24"/><rect x="1579" y="882.8" width="71" height="6.8" fill="#6fcd8f"/>
<rect x="1556" y="902.6" width="129" height="19.9" fill="#4fa772"/><rect x="1568" y="909.5" width="6" height="6" fill="#1d2a24"/><rect x="1579" y="910" width="96" height="7" fill="#6fcd8f"/>
<rect x="1563" y="927" width="71.6" height="26" fill="#1f2b27"/>
<rect x="1570.6" y="940" width="16.8" height="6" fill="url(#g1)"/>
<rect x="1613.2" y="927.5" width="21" height="21" fill="none" stroke="#4aa26f" stroke-width="1"/><rect x="1622.5" y="937" width="2" height="2" fill="#4aa26f"/>
<rect x="1644" y="933.4" width="88.8" height="20.6" fill="#4fa772"/><rect x="1655.8" y="941" width="5.2" height="6" fill="#1d2a24"/><rect x="1675.7" y="941.6" width="38.3" height="6.4" fill="#6fcd8f"/>
</svg>
<div class="a" style="left:2002.3px;top:268px;width:90px;height:57px;border-radius:28.5px;background:#232a33;border:1px solid #3a414b"></div>
<svg style="left:2018px;top:282px" width="30" height="30" viewBox="2018 282 30 30"><g fill="none" stroke="#f4f5f6" stroke-width="1.8" stroke-linejoin="round"><path d="M2021.6 295.8V306.5H2032.2A10.6 10.6 0 1 0 2021.6 295.8Z"/><path d="M2027.6 294.9H2036.6M2027.6 298.3H2036.6" stroke-linecap="round"/></g></svg>
</body></html>
